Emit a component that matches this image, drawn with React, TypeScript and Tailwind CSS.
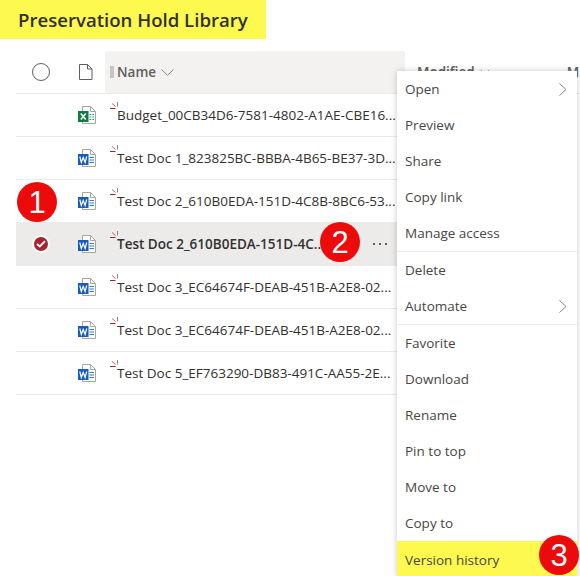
import { ChevronDown } from "lucide-react";

const font = "font-['Open_Sans','Noto_Sans',sans-serif]";

const FileIcon = ({ kind }: { kind: "word" | "excel" }) => {
  const color = kind === "word" ? "#185abd" : "#107c41";
  return (
    <svg width="18" height="18" viewBox="0 0 18 18" className="block">
      <path d="M4.500 .5H12.500L17.500 5.500V17.500H4.500V.5Z" fill="#fff" stroke="#a6a6a6" />
      <path d="M12.500 .5V5.500H17.500" fill="none" stroke="#a6a6a6" />
      {kind === "word" ? (
        <path d="M11.500 8.500H16M11.500 11H16M11.500 13.500H16" stroke="#2b7cd3" strokeWidth="1" />
      ) : (
        <path d="M11.500 8.500H13.300M14.300 8.500H16M11.500 11H13.300M14.300 11H16M11.500 13.500H13.300M14.300 13.500H16" stroke="#21a366" strokeWidth="1" />
      )}
      <rect x="0" y="5" width="10.500" height="11" fill={color} />
      {kind === "word" ? (
        <path d="M1.800 7.500L3.300 13.500L5.200 8.500L7.100 13.500L8.700 7.500" fill="none" stroke="#fff" strokeWidth="1.200" />
      ) : (
        <path d="M2.800 7.500L7.700 13.500M7.700 7.500L2.800 13.500" fill="none" stroke="#fff" strokeWidth="1.500" />
      )}
    </svg>
  );
};

const NewMark = () => (
  <svg width="9" height="9" viewBox="0 0 9 9" className="absolute left-[-7px] top-[-3px]">
    <path d="M0 6.500H5.500" stroke="#a4262c" strokeWidth="1" />
    <path d="M2 1.500L5.500 4.500" stroke="#a4262c" strokeOpacity="0.7" strokeWidth="1" />
    <path d="M7.500 0V4.500" stroke="#8a8886" strokeWidth="1" />
  </svg>
);

const Thin = ({ dir }: { dir: "down" | "right" }) =>
  dir === "down" ? (
    <svg width="13" height="7" viewBox="0 0 13 7" className="ml-[5px]">
      <path d="M.5 .5L6.500 6.300L12.500 .5" fill="none" stroke="#8a8886" />
    </svg>
  ) : (
    <svg width="8" height="13" viewBox="0 0 8 13">
      <path d="M.5 .5L7 6.500L.5 12.500" fill="none" stroke="#8a8886" />
    </svg>
  );

const Badge = ({ n, className }: { n: number; className: string }) => (
  <div className={`absolute flex h-10 w-10 items-center justify-center rounded-full bg-[#ec0a0a] font-['Liberation_Sans',sans-serif] text-[31px] leading-none text-white ${className}`}>
    {n}
  </div>
);

const rows: { name: string; kind: "word" | "excel"; selected?: boolean }[] = [
  { name: "Budget_00CB34D6-7581-4802-A1AE-CBE16...", kind: "excel" },
  { name: "Test Doc 1_823825BC-BBBA-4B65-BE37-3D...", kind: "word" },
  { name: "Test Doc 2_610B0EDA-151D-4C8B-8BC6-53...", kind: "word" },
  { name: "Test Doc 2_610B0EDA-151D-4C...", kind: "word", selected: true },
  { name: "Test Doc 3_EC64674F-DEAB-451B-A2E8-02...", kind: "word" },
  { name: "Test Doc 3_EC64674F-DEAB-451B-A2E8-02...", kind: "word" },
  { name: "Test Doc 5_EF763290-DB83-491C-AA55-2E...", kind: "word" },
];

const menu: { label: string; sub?: boolean; line?: boolean }[] = [
  { label: "Open", sub: true },
  { label: "Preview" },
  { label: "Share" },
  { label: "Copy link" },
  { label: "Manage access", line: true },
  { label: "Delete" },
  { label: "Automate", sub: true, line: true },
  { label: "Favorite" },
  { label: "Download" },
  { label: "Rename" },
  { label: "Pin to top" },
  { label: "Move to" },
  { label: "Copy to" },
];

export default function App() {
  return (
    <div className={`relative h-[576px] w-[580px] overflow-hidden bg-white ${font}`}>
      <div className="flex h-[39px] w-[266px] items-center bg-[#fdf94f] pl-[18px] text-[18.600px] font-semibold text-[#323130]">
        Preservation Hold Library
      </div>

      <div className="ml-[16px] mt-[12px]">
        <div className="flex h-[43px] border-b border-[#edebe9]">
          <div className="flex w-[50px] items-center justify-center">
            <div className="h-[18px] w-[18px] rounded-full border border-[#605e5c]" />
          </div>
          <div className="flex w-[39px] items-center justify-center">
            <svg width="14" height="16" viewBox="0 0 14 16">
              <path d="M.5 .5H8.500L13 5V15.500H.5V.5Z M8.500 .5V5H13" fill="none" stroke="#605e5c" />
            </svg>
          </div>
          <div className="flex w-[300px] items-center bg-[#f3f2f1] pl-[5px] text-[13.500px] font-semibold text-[#605e5c]">
            <div className="mr-[3px] h-[12px] w-[4px] bg-[#c8c6c4]" />
            Name
            <Thin dir="down" />
          </div>
          <div className="ml-[12px] flex items-center text-[13.500px] font-semibold text-[#605e5c]">
            Modified
            <ChevronDown size={16} strokeWidth={1} className="ml-[2px] text-[#8a8886]" />
            <span className="ml-[74px]">M</span>
          </div>
        </div>

        {rows.map((row, i) => (
          <div key={i} className={`flex h-[43px] w-[389px] items-center border-b border-[#edebe9] ${row.selected ? "bg-[#edebe9]" : ""}`}>
            <div className="flex w-[50px] justify-center">
              {row.selected && (
                <div className="flex h-[18px] w-[18px] items-center justify-center rounded-full border-2 border-white bg-[#a4262c]">
                  <svg width="10" height="8" viewBox="0 0 10 8">
                    <path d="M1 4L3.800 6.500L9 1.200" fill="none" stroke="#fff" strokeWidth="1.800" />
                  </svg>
                </div>
              )}
            </div>
            <div className="flex w-[39px] justify-center pl-[3px]">
              <FileIcon kind={row.kind} />
            </div>
            <div className={`relative ml-[12px] flex-1 whitespace-nowrap text-[13.500px] text-[#323130] ${row.selected ? "font-semibold" : ""}`}>
              <NewMark />
              {row.name}
            </div>
            {row.selected && (
              <div className="mr-[18px] flex gap-[4px]">
                <div className="h-[2px] w-[2px] bg-[#605e5c]" />
                <div className="h-[2px] w-[2px] bg-[#605e5c]" />
                <div className="h-[2px] w-[2px] bg-[#605e5c]" />
              </div>
            )}
          </div>
        ))}
      </div>

      <div className="absolute left-[397px] top-[71px] w-[180px] bg-white text-[13.500px] text-[#484644] shadow-[0_0_6px_rgba(0,0,0,0.22)]">
        {menu.map((item) => (
          <div key={item.label} className={item.line ? "border-b border-[#edebe9]" : ""}>
            <div className="flex h-9 items-center justify-between pl-[8px] pr-[10px]">
              {item.label}
              {item.sub && <Thin dir="right" />}
            </div>
          </div>
        ))}
        <div className="flex h-9 items-center bg-[#fdf94f] pl-[8px] pt-[2px]">Version history</div>
      </div>

      <Badge n={1} className="left-[17px] top-[182px]" />
      <Badge n={2} className="left-[320px] top-[222px]" />
      <Badge n={3} className="left-[539px] top-[535px]" />
    </div>
  );
}
